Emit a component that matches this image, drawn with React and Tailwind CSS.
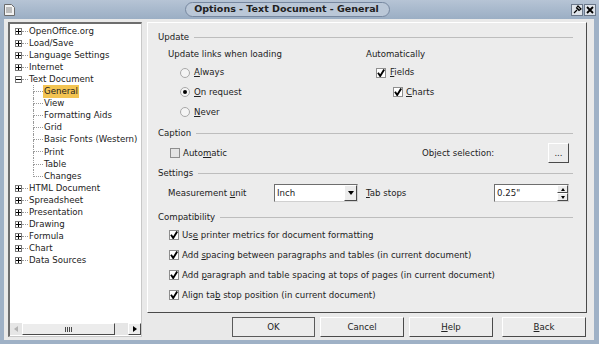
const font = "font-['DejaVu_Sans',sans-serif]"

function Check({ checked = true }) {
  return (
    <span
      className={
        'w-[10px] h-[10px] border border-[#8e8e8e] flex items-center justify-center shrink-0 ' +
        (checked ? 'bg-white' : 'bg-[#e4e4e4]')
      }
    >
      {checked && (
        <svg width="8" height="8" viewBox="0 0 8 8">
          <path d="M1 3.8 L3.2 7 L7.2 0.6" stroke="#000" strokeWidth="1.9" fill="none" />
        </svg>
      )}
    </span>
  )
}

function Radio({ selected }) {
  return (
    <span className="w-[10px] h-[10px] rounded-full border border-[#a8a8a8] bg-[#f4f4f4] flex items-center justify-center shrink-0">
      {selected && <span className="w-[4px] h-[4px] rounded-full bg-black" />}
    </span>
  )
}

function Mn({ pre = '', u, post = '' }) {
  return (
    <span>
      {pre}
      <u className="underline-offset-1">{u}</u>
      {post}
    </span>
  )
}

function Header({ children, className = '' }) {
  return (
    <div className={'flex items-center gap-[5px] h-[12px] pr-[13px] ' + className}>
      <span>{children}</span>
      <div className="flex-1 border-t border-[#bdbdbd]" />
    </div>
  )
}

function Button({ children, isDefault, className = '' }) {
  return (
    <div
      className={
        'h-[20px] flex items-center justify-center bg-[#ececec] border ' +
        (isDefault
          ? 'border-[#5a5a5a]'
          : 'border-t-white border-l-white border-r-[#4a4a4a] border-b-[#4a4a4a]') +
        ' ' +
        className
      }
    >
      {children}
    </div>
  )
}

const topItems = ['OpenOffice.org', 'Load/Save', 'Language Settings', 'Internet']
const children = ['General', 'View', 'Formatting Aids', 'Grid', 'Basic Fonts (Western)', 'Print', 'Table', 'Changes']
const bottomItems = ['HTML Document', 'Spreadsheet', 'Presentation', 'Drawing', 'Formula', 'Chart', 'Data Sources']

function ExpandBox({ open }) {
  return (
    <span className="w-[7px] h-[7px] border border-[#7a7a7a] bg-white flex items-center justify-center shrink-0">
      <svg width="5" height="5" viewBox="0 0 5 5">
        <path d={open ? 'M0 2.5 H5' : 'M0 2.5 H5 M2.5 0 V5'} stroke="#000" strokeWidth="1" />
      </svg>
    </span>
  )
}

function TopRow({ label, open }) {
  return (
    <div className="h-[12.1px] flex items-center pl-[5px]">
      <ExpandBox open={open} />
      <span className="w-[6px] border-t border-dotted border-[#9a9a9a] mr-[1px]" />
      <span className="whitespace-nowrap">{label}</span>
    </div>
  )
}

function ChildRow({ label, last, selected }) {
  return (
    <div className="h-[12.1px] flex items-stretch pl-[23px]">
      <div className="w-[10px] flex flex-col shrink-0">
        <div className="flex-1 border-l border-b border-dotted border-[#9a9a9a]" />
        <div className={'flex-1 border-l border-dotted ' + (last ? 'border-transparent' : 'border-[#9a9a9a]')} />
      </div>
      <div className="flex items-center">
        <span className={'whitespace-nowrap px-[1px] ' + (selected ? 'bg-[#f3c452]' : '')}>{label}</span>
      </div>
    </div>
  )
}

export default function App() {
  return (
    <div className={'w-[599px] h-[344px] flex flex-col bg-[#9fb1c6] text-[8.6px] text-[#222] ' + font}>
      {/* title bar */}
      <div className="h-[19px] flex items-center bg-linear-to-b from-[#b6c4d5] to-[#9baec4] px-[3px]">
        <svg width="13" height="14" viewBox="0 0 13 14" className="shrink-0">
          <path d="M1.5 1.5 H8.5 L11.5 4.5 V12.5 H1.5 Z" fill="#f2f2f2" stroke="#6c6c6c" />
          <path d="M3 5 H9 M3 7 H9 M3 9 H9" stroke="#8a8a8a" />
        </svg>
        <div className="flex-1 flex justify-center">
          <div className="h-[15px] pl-[8px] pr-[10px] flex items-center rounded-full border border-[#7788a0] bg-[#bac7d7] text-[9.5px] font-bold text-[#202020] ml-[-12px]">
            Options - Text Document - General
          </div>
        </div>
        <div className="flex gap-[1px]">
          <div className="w-[12px] h-[12px] bg-[#dfe4ea] border border-[#6a7789] flex items-center justify-center">
            <svg width="9" height="9" viewBox="0 0 9 9">
              <path d="M1 8 L4 5 M3.5 2.5 L6.5 5.5 M5 1 L8 4 L6 5.5 L3.5 3 Z" stroke="#000" strokeWidth="1.2" fill="none" />
            </svg>
          </div>
          <div className="w-[12px] h-[12px] bg-[#dfe4ea] border border-[#6a7789] flex items-center justify-center">
            <svg width="8" height="8" viewBox="0 0 8 8">
              <path d="M1 1 L7 7 M7 1 L1 7" stroke="#000" strokeWidth="1.8" />
            </svg>
          </div>
        </div>
      </div>

      {/* body */}
      <div className="flex-1 flex ml-[4px] mr-[5px] mb-[4px] bg-[#e9e9e9] pt-[3px] pb-[3px] pl-[4px] pr-[7px] gap-[5px]">
        {/* tree */}
        <div className="w-[134px] flex flex-col bg-white border-t-2 border-l-2 border-t-[#6e6e6e] border-l-[#6e6e6e] border-r border-b border-r-[#c8c8c8] border-b-[#c8c8c8]">
          <div className="flex-1 pt-[1px] overflow-hidden">
            {topItems.map((t) => (
              <TopRow key={t} label={t} />
            ))}
            <TopRow label="Text Document" open />
            {children.map((c, i) => (
              <ChildRow key={c} label={c} selected={i === 0} last={i === children.length - 1} />
            ))}
            {bottomItems.map((t) => (
              <TopRow key={t} label={t} />
            ))}
          </div>
          {/* scrollbar */}
          <div className="h-[12px] flex items-stretch bg-[#e6e6e6] mb-[1px]">
            <div className="w-[12px] flex items-center justify-center">
              <svg width="4" height="6" viewBox="0 0 4 6">
                <path d="M4 0 L0 3 L4 6 Z" fill="#b4b4b4" />
              </svg>
            </div>
            <div className="w-[93px] flex items-center justify-center bg-[#ececec] border-t border-l border-t-white border-l-white border-r border-b border-r-[#4a4a4a] border-b-[#4a4a4a]">
              <svg width="7" height="5" viewBox="0 0 7 5">
                <path d="M0.5 0 V5 M2.5 0 V5 M4.5 0 V5 M6.5 0 V5" stroke="#4a4a4a" />
              </svg>
            </div>
            <div className="flex-1" />
            <div className="w-[13px] flex items-center justify-center bg-[#ececec] border-t border-l border-t-white border-l-white border-r border-b border-r-[#4a4a4a] border-b-[#4a4a4a]">
              <svg width="4" height="6" viewBox="0 0 4 6">
                <path d="M0 0 L4 3 L0 6 Z" fill="#000" />
              </svg>
            </div>
          </div>
        </div>

        {/* right side */}
        <div className="flex-1 flex flex-col">
          <div className="h-[291px] bg-[#ececec] border border-t-white border-l-white border-r-[#4a4a4a] border-b-[#4a4a4a] pl-[10px] pt-[8px]">
            <Header>Update</Header>
            <div className="flex mt-[2px]">
              <div className="w-[208px] pl-[10px] flex flex-col">
                <div className="h-[18px] flex items-center">Update links when loading</div>
                <div className="h-[19px] flex items-center gap-[4px] pl-[12px]">
                  <Radio />
                  <Mn u="A" post="lways" />
                </div>
                <div className="h-[20px] flex items-center gap-[4px] pl-[12px]">
                  <Radio selected />
                  <Mn u="O" post="n request" />
                </div>
                <div className="h-[20px] flex items-center gap-[4px] pl-[12px]">
                  <Radio />
                  <Mn u="N" post="ever" />
                </div>
              </div>
              <div className="flex flex-col">
                <div className="h-[18px] flex items-center">Automatically</div>
                <div className="h-[19px] flex items-center gap-[4px] pl-[10px]">
                  <Check />
                  <Mn u="F" post="ields" />
                </div>
                <div className="h-[20px] flex items-center gap-[3px] pl-[27px]">
                  <Check />
                  <Mn u="C" post="harts" />
                </div>
              </div>
            </div>

            <Header className="mt-[5px]">Caption</Header>
            <div className="h-[20px] mt-[4px] flex items-center pl-[12px] pr-[17px]">
              <Check checked={false} />
              <span className="ml-[3px]">
                <Mn pre="Auto" u="m" post="atic" />
              </span>
              <div className="flex-1" />
              <span className="w-[126px]">Object selection:</span>
              <Button className="w-[21px] !h-[20px]">...</Button>
            </div>

            <Header className="mt-[4px]">Settings</Header>
            <div className="h-[18px] mt-[5px] flex items-center pl-[10px]">
              <span className="w-[106px]">
                <Mn pre="Measurement " u="u" post="nit" />
              </span>
              <div className="w-[84px] h-[18px] flex items-stretch bg-white border border-t-[#6e6e6e] border-l-[#6e6e6e] border-r-[#d0d0d0] border-b-[#d0d0d0]">
                <span className="flex-1 flex items-center pl-[2px]">Inch</span>
                <div className="w-[13px] flex items-center justify-center bg-[#ececec] border-t border-l border-t-white border-l-white border-r border-b border-r-[#4a4a4a] border-b-[#4a4a4a]">
                  <svg width="6" height="4" viewBox="0 0 6 4">
                    <path d="M0 0 H6 L3 4 Z" fill="#000" />
                  </svg>
                </div>
              </div>
              <span className="w-[128px] ml-[8px]">
                <Mn u="T" post="ab stops" />
              </span>
              <div className="w-[75px] h-[18px] flex items-stretch bg-white border border-t-[#6e6e6e] border-l-[#6e6e6e] border-r-[#d0d0d0] border-b-[#d0d0d0]">
                <span className="flex-1 flex items-center pl-[2px]">0.25"</span>
                <div className="w-[11px] flex flex-col">
                  <div className="flex-1 flex items-center justify-center bg-[#ececec] border border-t-white border-l-white border-r-[#4a4a4a] border-b-[#4a4a4a]">
                    <svg width="4" height="3" viewBox="0 0 4 3">
                      <path d="M0 3 H4 L2 0 Z" fill="#000" />
                    </svg>
                  </div>
                  <div className="flex-1 flex items-center justify-center bg-[#ececec] border border-t-white border-l-white border-r-[#4a4a4a] border-b-[#4a4a4a]">
                    <svg width="4" height="3" viewBox="0 0 4 3">
                      <path d="M0 0 H4 L2 3 Z" fill="#000" />
                    </svg>
                  </div>
                </div>
              </div>
            </div>

            <Header className="mt-[9px]">Compatibility</Header>
            <div className="mt-[2px] pl-[11px] flex flex-col">
              <div className="h-[20px] flex items-center gap-[3px]">
                <Check />
                <Mn pre="Us" u="e" post=" printer metrics for document formatting" />
              </div>
              <div className="h-[20px] flex items-center gap-[3px]">
                <Check />
                <Mn pre="Add " u="s" post="pacing between paragraphs and tables (in current document)" />
              </div>
              <div className="h-[20px] flex items-center gap-[3px]">
                <Check />
                <Mn pre="Add " u="p" post="aragraph and table spacing at tops of pages (in current document)" />
              </div>
              <div className="h-[20px] flex items-center gap-[3px]">
                <Check />
                <Mn pre="Align ta" u="b" post=" stop position (in current document)" />
              </div>
            </div>
          </div>

          <div className="mt-[4px] flex justify-end pr-[1px]">
            <Button isDefault className="w-[83px]">OK</Button>
            <Button className="w-[84px] ml-[5px]">Cancel</Button>
            <Button className="w-[84px] ml-[5px]">
              <Mn u="H" post="elp" />
            </Button>
            <Button className="w-[84px] ml-[9px]">
              <Mn u="B" post="ack" />
            </Button>
          </div>
        </div>
      </div>
    </div>
  )
}
